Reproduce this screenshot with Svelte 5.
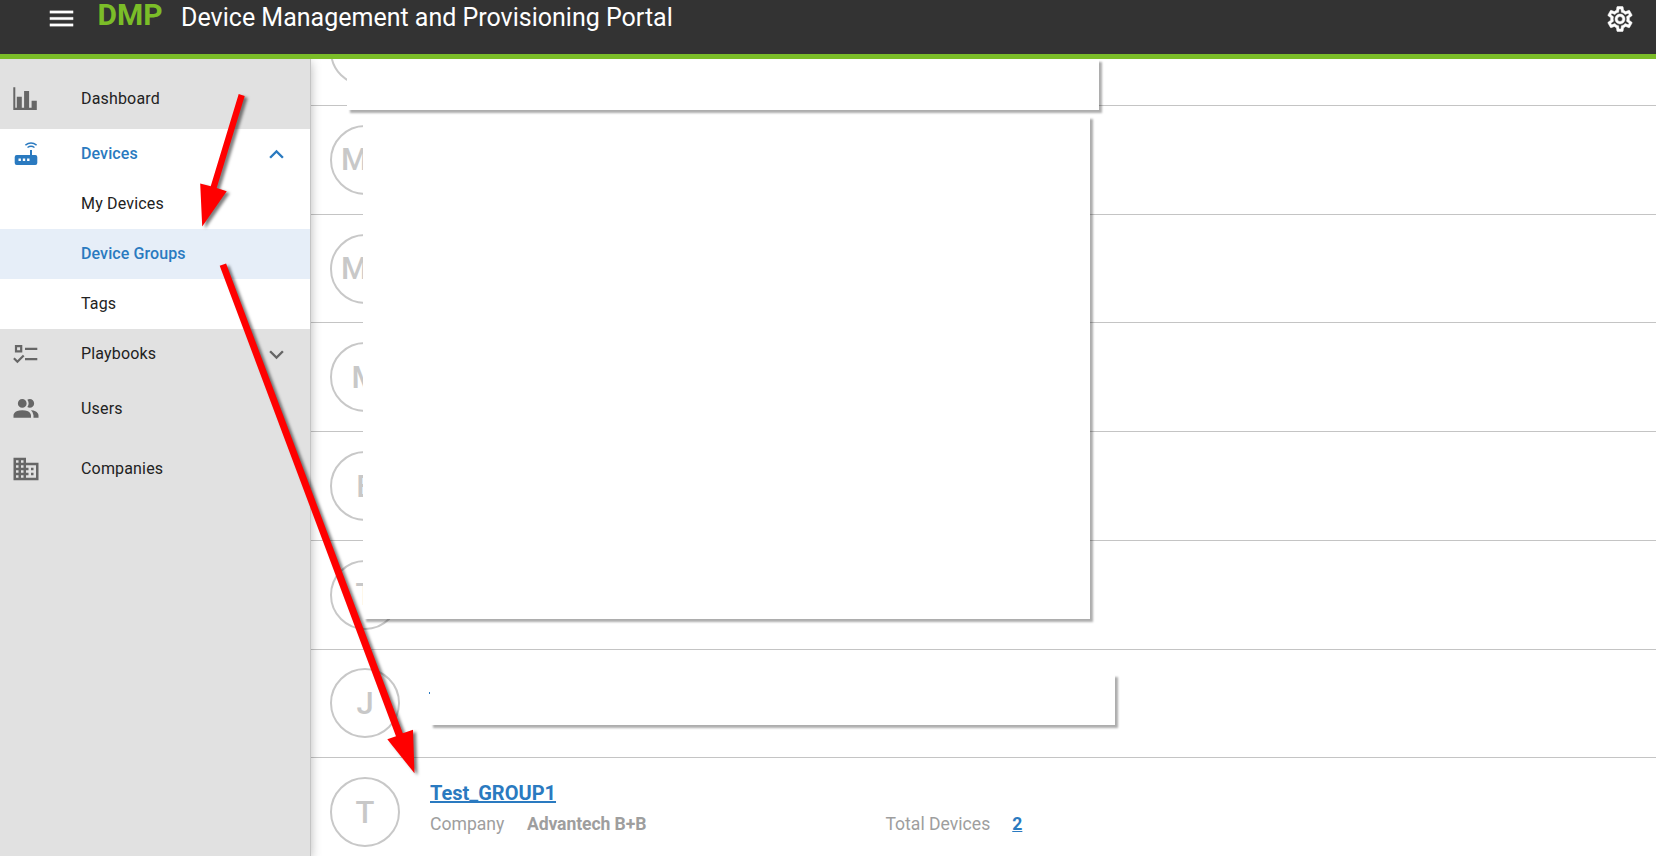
<script>
  const rows = [
    { initial: '' },
    { initial: 'M', wide: true },
    { initial: 'M', wide: true },
    { initial: 'M' },
    { initial: 'E' },
    { initial: 'T' },
    { initial: 'J' },
    { initial: 'T', name: 'Test_GROUP1', company: 'Advantech B+B', total: 2 }
  ];
</script>

<header>
  <svg class="menu" viewBox="0 0 24 24"><path d="M3 6h18v2H3zM3 11h18v2H3zM3 16h18v2H3z" /></svg>
  <strong class="dmp">DMP</strong>
  <h1 class="title">Device Management and Provisioning Portal</h1>
  <svg class="cog" viewBox="0 0 24 24"><path d="M12,8A4,4 0 0,1 16,12A4,4 0 0,1 12,16A4,4 0 0,1 8,12A4,4 0 0,1 12,8M12,10A2,2 0 0,0 10,12A2,2 0 0,0 12,14A2,2 0 0,0 14,12A2,2 0 0,0 12,10M10,22C9.75,22 9.54,21.82 9.5,21.58L9.13,18.93C8.5,18.68 7.96,18.34 7.44,17.94L4.95,18.95C4.73,19.03 4.46,18.95 4.34,18.73L2.34,15.27C2.21,15.05 2.27,14.78 2.46,14.63L4.57,12.97L4.5,12L4.57,11L2.46,9.37C2.27,9.22 2.21,8.95 2.34,8.73L4.34,5.27C4.46,5.05 4.73,4.96 4.95,5.05L7.44,6.05C7.96,5.66 8.5,5.32 9.13,5.07L9.5,2.42C9.54,2.18 9.75,2 10,2H14C14.25,2 14.46,2.18 14.5,2.42L14.87,5.07C15.5,5.32 16.04,5.66 16.56,6.05L19.05,5.05C19.27,4.96 19.54,5.05 19.66,5.27L21.66,8.73C21.79,8.95 21.73,9.22 21.54,9.37L19.43,11L19.5,12L19.43,13L21.54,14.63C21.73,14.78 21.79,15.05 21.66,15.27L19.66,18.73C19.54,18.95 19.27,19.04 19.05,18.95L16.56,17.95C16.04,18.34 15.5,18.68 14.87,18.93L14.5,21.58C14.46,21.82 14.25,22 14,22H10M11.25,4L10.88,6.61C9.68,6.86 8.62,7.5 7.85,8.39L5.44,7.35L4.69,8.65L6.8,10.2C6.4,11.37 6.4,12.64 6.8,13.8L4.68,15.36L5.43,16.66L7.86,15.62C8.63,16.5 9.68,17.14 10.87,17.38L11.24,20H12.76L13.13,17.39C14.32,17.14 15.37,16.5 16.14,15.62L18.57,16.66L19.32,15.36L17.2,13.81C17.6,12.64 17.6,11.37 17.2,10.2L19.31,8.65L18.56,7.35L16.15,8.39C15.38,7.5 14.32,6.86 13.12,6.62L12.75,4H11.25Z" /></svg>
</header>

<div class="body">
  <nav>
    <a class="item tall">
      <svg class="icon" viewBox="0 0 30 30"><path d="M2.3 3.3h2v20.5h1.5v-11h5v11h2.3V7h5v16.8h2.5v-7h5.2V26H2.3z" /></svg>
      <span class="label">Dashboard</span>
    </a>
    <a class="item open blue">
      <svg class="icon" viewBox="0 0 30 30">
        <path fill-rule="evenodd" d="M5.7 16H19v-5h2v5h3.300a2 2 0 0 1 2 2v6a2 2 0 0 1-2 2H5.700a2 2 0 0 1-2-2v-6a2 2 0 0 1 2-2zM7.500 19.600v2.400h2.400v-2.400zM11.800 19.600v2.400h2.400v-2.400zM16.100 19.600v2.400h2.400v-2.400z" />
        <path class="line thin" d="M14.400 6.100Q20 1.900 25.600 6.100M16.500 8.500Q20 6 23.500 8.500" />
      </svg>
      <span class="label">Devices</span>
      <svg class="chev" viewBox="0 0 24 24"><path d="M7.410 15.410 12 10.830l4.590 4.580L18 14l-6-6-6 6z" /></svg>
    </a>
    <a class="item open sub"><span class="label">My Devices</span></a>
    <a class="item sub active blue"><span class="label">Device Groups</span></a>
    <a class="item open sub"><span class="label">Tags</span></a>
    <a class="item">
      <svg class="icon" viewBox="0 0 30 30">
        <path class="line" d="M5 7.100h5.200v5.200H5zM14 9.800h12.300M14 20.200h12.300M2.900 19.300l3.500 3.500 6.300-6.300" />
      </svg>
      <span class="label">Playbooks</span>
      <svg class="chev" viewBox="0 0 24 24"><path d="M7.410 8.590 12 13.170l4.590-4.580L18 10l-6 6-6-6z" /></svg>
    </a>
    <a class="item tall">
      <svg class="icon" viewBox="0 0 24 24"><path d="M16 17V19H2V17S2 13 9 13 16 17 16 17M12.5 7.5A3.5 3.5 0 1 0 9 11A3.5 3.5 0 0 0 12.5 7.5M15.94 13A5.32 5.32 0 0 1 18 17V19H22V17S22 13.37 15.94 13M15 4A3.39 3.39 0 0 0 13.07 4.59A5 5 0 0 1 13.07 10.41A3.39 3.39 0 0 0 15 11A3.5 3.5 0 0 0 15 4Z" /></svg>
      <span class="label">Users</span>
    </a>
    <a class="item tall">
      <svg class="icon" viewBox="0 0 24 24"><path d="M12 7V3H2v18h20V7H12zM6 19H4v-2h2v2zm0-4H4v-2h2v2zm0-4H4V9h2v2zm0-4H4V5h2v2zm4 12H8v-2h2v2zm0-4H8v-2h2v2zm0-4H8V9h2v2zm0-4H8V5h2v2zm10 12h-8v-2h2v-2h-2v-2h2v-2h-2V9h8v10zm-2-8h-2v2h2v-2zm0 4h-2v2h2v-2z" /></svg>
      <span class="label">Companies</span>
    </a>
  </nav>

  <main>
    {#each rows as row}
      <section class="row">
        <div class="avatar" class:wide={row.wide}>{row.initial}</div>
        {#if row.name}
          <div class="info">
            <a class="name">{row.name}</a>
            <div class="meta">
              <span class="key">Company</span>
              <b class="company">{row.company}</b>
              <span class="total">Total Devices</span>
              <a class="count">{row.total}</a>
            </div>
          </div>
        {/if}
      </section>
    {/each}
  </main>
</div>

<div class="cover first"></div>
<div class="cover second"></div>
<div class="cover third"></div>
<i class="dot"></i>

<svg class="arrows" viewBox="0 0 1656 856">
  <path d="M238.700 94l6 2-28 92 10 3.200-24.500 35.400-2-43 10.500 2.600z" />
  <path d="M219.700 265.700l6.400-2.200 176.700 469.800 10.200-3.600 1.500 43.600-27.200-34 8.700-3z" />
</svg>

<style>
  :global(body) { background: #fff; overflow: hidden; font-family: Roboto, sans-serif; }
  header {
    box-sizing: border-box;
    display: flex;
    align-items: flex-start;
    height: 59px;
    padding: 0 21px 0 45.500px;
    background: #333;
    border-bottom: 5px solid #7bbd28;
    color: #fff;
  }
  header svg { fill: #fff; flex: none; }
  .menu { width: 31px; height: 31px; margin-top: 3px; stroke: #fff; stroke-width: 0.2; }
  .dmp { margin-left: 21px; font-size: 30px; line-height: 30px; font-weight: 700; color: #7bbd28; }
  .title { margin: 0 auto 0 18.500px; font-size: 25px; line-height: 35px; font-weight: 400; }
  .cog { width: 30px; height: 30px; margin-top: 4px; stroke: #fff; stroke-width: 0.4; }

  .body { display: flex; height: 797px; overflow: hidden; }
  nav {
    flex: none;
    box-sizing: border-box;
    width: 311px;
    padding-top: 10px;
    background: #e1e1e1;
    border-right: 1px solid #c4c4c4;
    box-shadow: 0 3px 10px rgba(0, 0, 0, 0.28);
    position: relative;
    z-index: 1;
  }
  .item {
    display: flex;
    align-items: center;
    height: 50px;
    padding: 0 19.500px 0 11px;
    font-size: 16px;
    letter-spacing: 0.17px;
    color: #222;
    fill: #666;
  }
  .label { padding-bottom: 1px; }
  .tall { height: 60px; }
  .open { background: #fff; }
  .sub { padding-left: 81px; }
  .active { background: #e6eef8; }
  .blue { color: #2a7ac0; fill: #2a7ac0; font-weight: 500; letter-spacing: 0.1px; }
  .icon { width: 30px; height: 30px; margin-right: 40px; }
  .icon .line { fill: none; stroke: #666; stroke-width: 2.200; }
  .icon .thin { stroke: #2a7ac0; stroke-width: 1.400; }
  .chev { width: 29px; height: 29px; margin-left: auto; }

  main { flex: 1; margin-top: -61.670px; }
  .row {
    box-sizing: border-box;
    display: flex;
    align-items: center;
    height: 108.704px;
    padding-left: 19px;
    border-bottom: 1px solid #c4c4c4;
  }
  .avatar {
    box-sizing: border-box;
    display: flex;
    flex: none;
    align-items: center;
    justify-content: center;
    width: 70px;
    height: 70px;
    border: 2px solid #c8c8c8;
    border-radius: 50%;
    font-size: 31px;
    font-weight: 500;
    color: #c8c8c8;
  }
  .wide { justify-content: flex-start; padding-left: 9px; }
  .info { margin-left: 30px; padding-bottom: 8px; }
  .name { display: block; font-size: 20px; line-height: 26px; font-weight: 700; }
  .name, .count { color: #2a7ac0; text-decoration: underline; }
  .meta { display: flex; margin-top: 6px; font-size: 17.600px; line-height: 24px; color: #9e9e9e; }
  .company { width: 358.500px; margin-left: 22.500px; font-weight: 700; letter-spacing: -0.1px; }
  .count { margin-left: 22px; font-weight: 700; }

  .cover { position: absolute; z-index: 2; background: #fff; box-shadow: 2.500px 2.500px 2px rgba(0, 0, 0, 0.32); }
  .first { left: 347px; top: 59px; width: 752px; height: 51px; }
  .second { left: 363px; top: 116px; width: 727px; height: 503px; }
  .third { left: 430px; top: 674px; width: 685px; height: 51px; }
  .dot { position: absolute; left: 429px; top: 692px; width: 1px; height: 2px; background: #2a7ac0; z-index: 3; }
  .arrows {
    position: absolute;
    inset: 0;
    z-index: 4;
    width: 1656px;
    height: 856px;
    fill: red;
    filter: drop-shadow(3px 2px 1.500px rgba(0, 0, 0, 0.5));
  }
</style>
